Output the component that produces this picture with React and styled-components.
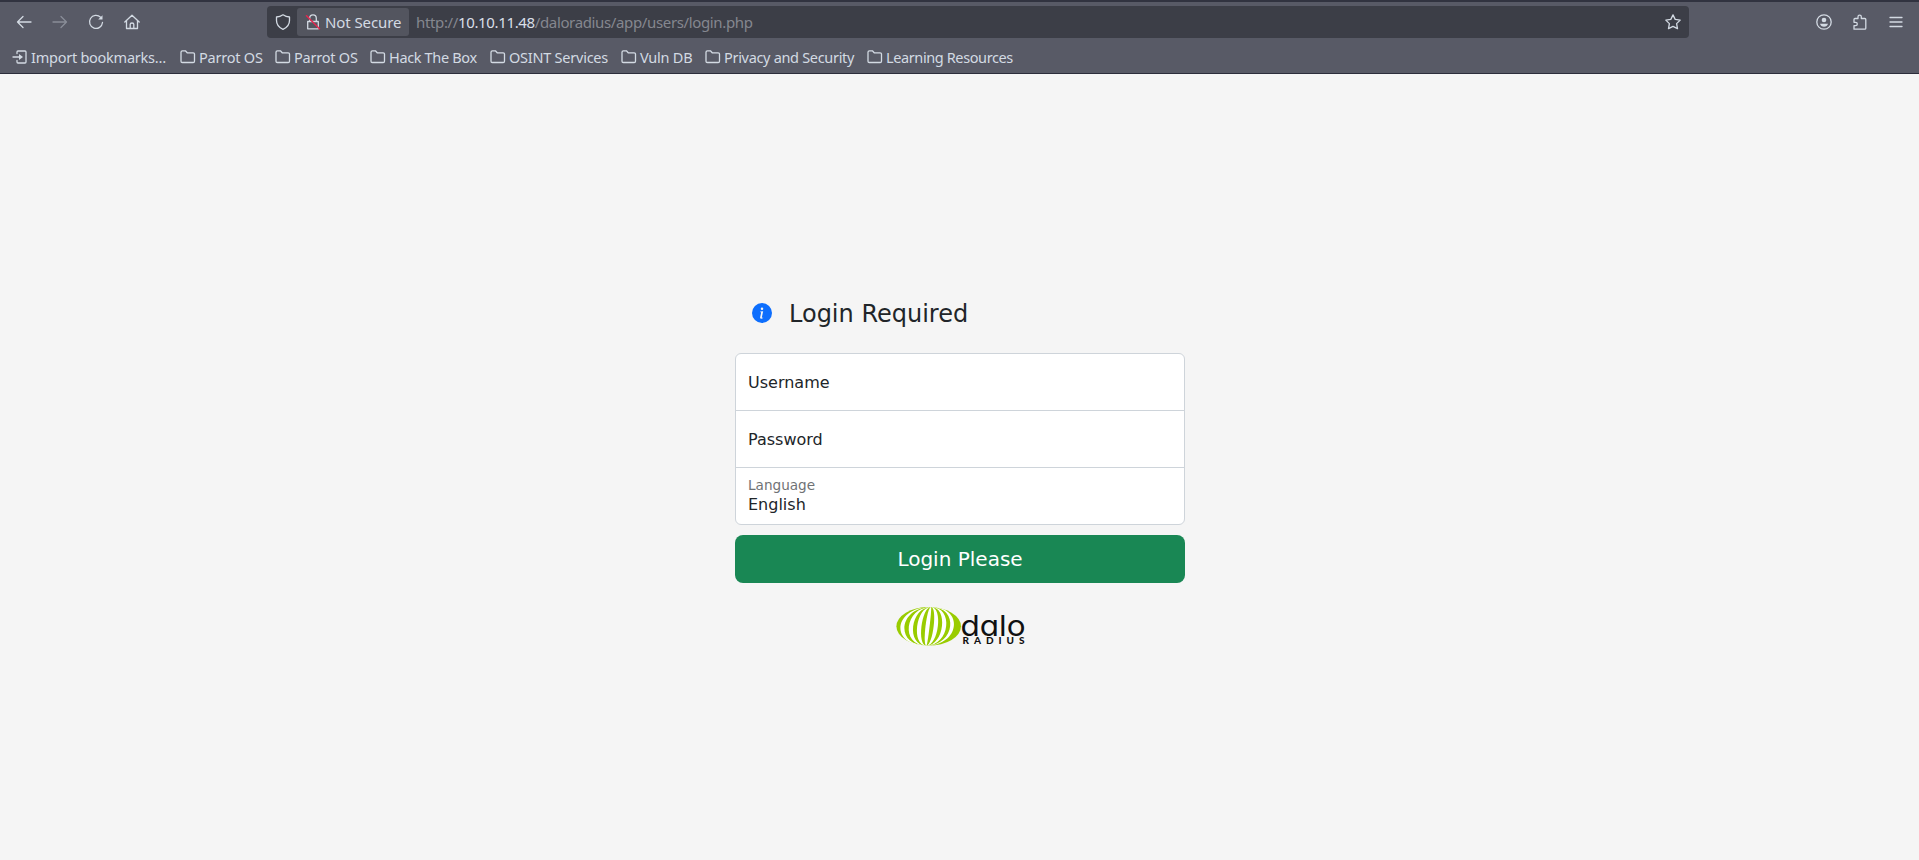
import React from 'react';
import styled, { createGlobalStyle } from 'styled-components';

const Global = createGlobalStyle`
  * { box-sizing: border-box; }
  body { margin: 0; background: #f5f5f5; font-family: "DejaVu Sans", sans-serif; color: #212529; }
`;

const Page = styled.div`
  height: 860px;
  overflow: hidden;
  display: flex;
  flex-direction: column;
`;

const Chrome = styled.header`
  height: 74px;
  flex: none;
  background: #585a66;
  border-top: 2px solid #313340;
  border-bottom: 1px solid #2c2d3b;
  font-family: "Noto Sans", sans-serif;
  color: #d3dae3;
  white-space: nowrap;
`;

const NavBar = styled.div`
  display: flex;
  align-items: center;
  height: 40px;
  padding-left: 16px;
`;

const NavIcons = styled.div`
  display: flex;
  width: 251px;
  gap: 20px;
`;

const Icon = styled.svg`
  width: 16px;
  height: 16px;
  flex: none;
  display: block;
  fill: none;
  stroke: currentColor;
  stroke-width: 1.3;
  stroke-linecap: round;
  stroke-linejoin: round;
  opacity: ${(p) => (p.$dim ? 0.4 : 1)};
`;

const UrlBar = styled.div`
  display: flex;
  align-items: center;
  width: 1422px;
  height: 32px;
  padding: 0 8px;
  border-radius: 4px;
  background: #3c3e47;
`;

const Security = styled.div`
  display: flex;
  align-items: center;
  gap: 4px;
  width: 112px;
  height: 28px;
  margin-left: 6px;
  padding-left: 8px;
  border-radius: 3px;
  background: #53555f;
`;

const Text = styled.span`
  font-size: ${(p) => p.$size || 15}px;
  letter-spacing: ${(p) => p.$track || 0}px;
  line-height: 20px;
`;

const Url = styled(Text)`
  flex: 1;
  margin-left: 7px;
  color: #85878f;
  b { font-weight: 400; color: #d9dfe7; }
`;

const Tools = styled.div`
  display: flex;
  gap: 20px;
  margin-left: 127px;
`;

const Bookmarks = styled.nav`
  display: flex;
  align-items: center;
  height: 29px;
  padding-left: 12px;
`;

const Bookmark = styled.div`
  display: flex;
  align-items: center;
  gap: 3px;
  width: ${(p) => p.$w}px;
  flex: none;
`;

const Main = styled.main`
  flex: 1;
  display: flex;
  flex-direction: column;
  align-items: center;
  padding-top: 221px;
`;

const Form = styled.form`
  width: 450px;
  margin-left: 1px;
  display: flex;
  flex-direction: column;
`;

const Title = styled.h1`
  display: flex;
  align-items: center;
  gap: 17px;
  height: 36px;
  margin: 0 0 22px;
  padding-left: 17px;
  font-size: 24px;
  line-height: 29px;
  font-weight: 400;
  span { padding-top: 3px; }
`;

const Fields = styled.div`
  height: 172px;
  background: #fff;
  border: 1px solid #ced4da;
  border-radius: 6px;
  overflow: hidden;
`;

const Field = styled.div`
  height: 56px;
  padding: ${(p) => (p.$lift ? '0 12px 2px' : '2px 12px 0')};
  display: flex;
  flex-direction: column;
  justify-content: center;
  font-size: 16px;
  line-height: 20px;
  & + & { height: 57px; border-top: 1px solid #ced4da; }
`;

const Hint = styled.span`
  font-size: 13.6px;
  line-height: 19px;
  color: #6f7275;
`;

const Submit = styled.button`
  height: 48px;
  margin: 10px 0 24px;
  border: 0;
  border-radius: 8px;
  background: #198754;
  color: #fff;
  font: 20px "DejaVu Sans", sans-serif;
`;

const Logo = styled.svg`
  width: 130px;
  height: 40px;
  align-self: center;
`;

const folder = <path d="M1 3.2q0-1.4 1.4-1.4h3l1.8 2h6q1.3 0 1.3 1.3v7.1q0 1.3-1.3 1.3H2.3Q1 13.5 1 12.2z" />;

const bookmarks = [
  ['Parrot OS', 95, -0.22], ['Parrot OS', 95, -0.22], ['Hack The Box', 120, -0.35], ['OSINT Services', 131, -0.24],
  ['Vuln DB', 84, -0.24], ['Privacy and Security', 162, -0.31], ['Learning Resources', 150, -0.39],
];

// Each pair is the left and right reach of one white gore, measured from the globe's axis.
const gores = [[-28.2, -24.2], [-19.8, -15.5], [-11.5, -7.2], [-3.2, 0.9], [5, 9.2], [13.3, 17.5], [21.5, 25.2]];
const gorePath = ([a, b]) => {
  const l = (a * 4) / 3;
  const r = (b * 4) / 3;
  return `M36 0C${36 + l} 0 ${31.4 + l} 38.6 31.4 38.6C${31.4 + r} 38.6 ${36 + r} 0 36 0z`;
};

export default function App() {
  return (
    <Page>
      <Global />
      <Chrome>
        <NavBar>
          <NavIcons>
            <Icon viewBox="0 0 16 16"><path d="M1.5 8H15M7 2.5 1.5 8 7 13.5" /></Icon>
            <Icon viewBox="0 0 16 16" $dim><path d="M1 8h13.5M9 2.5 14.5 8 9 13.5" /></Icon>
            <Icon viewBox="0 0 16 16">
              <path d="M12.6 3.3A6.5 6.5 0 1 0 14.5 8.5" />
              <path d="M14.5 1.2v4.3h-4.3z" fill="currentColor" stroke="none" />
            </Icon>
            <Icon viewBox="0 0 16 16"><path d="M.8 8 8 1.2 15.2 8M2.5 6.7V14.5H13.5V6.7M6.2 14.3V10.3q0-1.3 1.8-1.3t1.8 1.3v4" /></Icon>
          </NavIcons>
          <UrlBar>
            <Icon viewBox="0 0 16 16"><path d="M8 .8q3 2 6.5 2.2v3.5Q14.5 12.5 8 15.3 1.5 12.5 1.5 6.5V3Q5 2.8 8 .8z" /></Icon>
            <Security>
              <Icon viewBox="0 0 16 16">
                <path d="M2.7 7.5h10.6v7.3H2.7zM4.7 7.3V4.2a3.3 3.3 0 0 1 6.6 0v3.1" />
                <path d="M1.500 1.8 14.5 14.8" stroke="#e22850" strokeWidth="1.6" />
              </Icon>
              <Text $track={-0.1}>Not Secure</Text>
            </Security>
            <Url $track={-0.36}>http://<b>10.10.11.48</b>/daloradius/app/users/login.php</Url>
            <Icon viewBox="0 0 16 16"><path d="m8 .9 2.2 4.5 5 .7-3.6 3.5.9 5L8 12.300l-4.500 2.300.9-5L.8 6.100l5-.7z" /></Icon>
          </UrlBar>
          <Tools>
            <Icon viewBox="0 0 16 16">
              <circle cx="8" cy="8" r="7.2" />
              <circle cx="8" cy="6" r="2.3" fill="currentColor" stroke="none" />
              <path d="M4 9.8h8q-.8 3-4 3t-4-3z" fill="currentColor" stroke="none" />
            </Icon>
            <Icon viewBox="0 0 16 16"><path d="M2 15.2V11.700h1.600a1.600 1.600 0 0 0 0-3.400H2V5.500q0-1 1-1h3V2.700a1.600 1.600 0 0 1 3.300 0v1.800h3.500q1 0 1 1v8.700q0 1-1 1z" /></Icon>
            <Icon viewBox="0 0 16 16"><path d="M2 3.500h12M2 8h12M2 12.500h12" /></Icon>
          </Tools>
        </NavBar>
        <Bookmarks>
          <Bookmark $w={168}>
            <Icon viewBox="0 0 16 16">
              <path d="M5 4.500V3q0-1 1-1h7q1 0 1 1v10q0 1-1 1H6q-1 0-1-1v-1.500M1 8h7" />
              <path d="M7 5v6l4-3z" fill="currentColor" stroke="none" />
            </Icon>
            <Text $size={14.5} $track={-0.25}>Import bookmarks…</Text>
          </Bookmark>
          {bookmarks.map(([name, w, track], i) => (
            <Bookmark key={i} $w={w}>
              <Icon viewBox="0 0 16 16">{folder}</Icon>
              <Text $size={14.5} $track={track}>{name}</Text>
            </Bookmark>
          ))}
        </Bookmarks>
      </Chrome>
      <Main>
        <Form>
          <Title>
            <svg width="20" height="20" viewBox="0 0 16 16" fill="#0d6efd">
              <path d="M8 16A8 8 0 1 0 8 0a8 8 0 0 0 0 16m.93-9.412-1 4.705c-.07.34.029.533.304.533.194 0 .487-.07.686-.246l-.088.416c-.287.346-.92.598-1.465.598-.703 0-1.002-.422-.808-1.319l.738-3.468c.064-.293.006-.399-.287-.47l-.451-.081.082-.381 2.290-.287zM8 5.500a1 1 0 1 1 0-2 1 1 0 0 1 0 2" />
            </svg>
            <span>Login Required</span>
          </Title>
          <Fields>
            <Field>Username</Field>
            <Field>Password</Field>
            <Field $lift><Hint>Language</Hint>English</Field>
          </Fields>
          <Submit type="button">Login Please</Submit>
          <Logo viewBox="0 0 130 40">
            <ellipse cx="33.7" cy="19.3" rx="32.3" ry="19.3" fill="#99cc00" />
            <g fill="#fff">{gores.map((g, i) => <path key={i} d={gorePath(g)} />)}</g>
            <text x="65.5" y="28.5" fontFamily="Inter, sans-serif" fontWeight="400" fontSize="29" textLength="65" lengthAdjust="spacingAndGlyphs" style={{ fontFeatureSettings: '"cv11"' }} fill="#111">dalo</text>
            <text x="67.5" y="36.5" fontFamily="Lato, sans-serif" fontWeight="900" fontSize="10" textLength="62" fill="#111">RADIUS</text>
          </Logo>
        </Form>
      </Main>
    </Page>
  );
}
